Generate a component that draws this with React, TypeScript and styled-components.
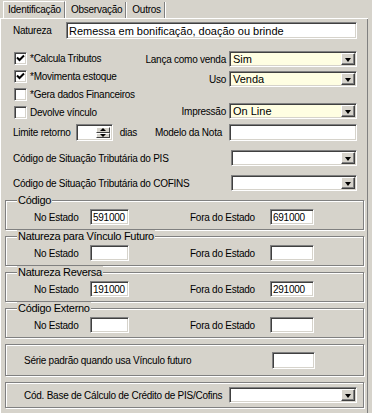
import styled, { createGlobalStyle } from "styled-components";

const GlobalStyle = createGlobalStyle`
  html, body { margin: 0; padding: 0; background: #ffffff; }
  body {
    font-family: "Liberation Sans", Arial, sans-serif;
    font-size: 10px;
    letter-spacing: -0.25px;
    color: #000000;
  }
  * { box-sizing: border-box; }
`;

const FACE = "#d6d3cb";

const Window = styled.div`
  width: 372px;
  height: 413px;
  background: ${FACE};
  display: flex;
  flex-direction: column;
`;

const TabBar = styled.div`
  display: flex;
  height: 19px;
  width: 368px;
  padding: 2px 0 0 3px;
  border-bottom: 1px solid #ffffff;
`;

const Tab = styled.div<{ $active?: boolean }>`
  height: 16px;
  line-height: 15px;
  padding: 0 3px 0 4px;
  margin-right: 2px;
  border-right: 1px solid #808080;
  box-shadow: 1px 0 0 #ffffff;
  white-space: nowrap;
  ${(p) => (p.$active ? "border-left: 1px solid #ffffff; border-top: 1px solid #ffffff; margin-top: -1px; height: 17px;" : "")}
`;

const Panel = styled.div`
  flex: 1;
  width: 368px;
  border-left: 1px solid #ffffff;
  border-right: 1px solid #808080;
  display: flex;
  flex-direction: column;
`;

const Row = styled.div<{ $mt?: number }>`
  display: flex;
  align-items: center;
  margin-top: ${(p) => p.$mt ?? 0}px;
  padding-left: 12px;
  padding-right: 10px;
`;

const Label = styled.span<{ $w?: number }>`
  display: inline-block;
  flex-shrink: 0;
  white-space: nowrap;
  width: ${(p) => (p.$w ? `${p.$w}px` : "auto")};
`;

const Spacer = styled.div`
  flex: 1;
`;

const sunken = `
  border: 1px solid;
  border-color: #808080 #ffffff #ffffff #808080;
  box-shadow: inset 1px 1px 0 #404040, inset -1px -1px 0 ${FACE};
`;

const TextBox = styled.input<{ $w?: number; $h?: number; $big?: boolean }>`
  ${sunken}
  width: ${(p) => (p.$w ? `${p.$w}px` : "auto")};
  flex: ${(p) => (p.$w ? "none" : "1")};
  height: ${(p) => p.$h ?? 17}px;
  background: #ffffff;
  font-family: inherit;
  font-size: ${(p) => (p.$big ? 11 : 10)}px;
  letter-spacing: ${(p) => (p.$big ? 0 : -0.25)}px;
  color: #000;
  padding: 1px 0 0 2px;
  outline: none;
  margin: 0;
`;

const Combo = styled.div<{ $w: number; $yellow?: boolean }>`
  ${sunken}
  width: ${(p) => p.$w}px;
  height: 16px;
  padding: 2px;
  display: flex;
  background: ${(p) => (p.$yellow ? "#fffee2" : "#ffffff")};
  flex-shrink: 0;
`;

const ComboValue = styled.span`
  flex: 1;
  line-height: 11px;
  padding-left: 1px;
  white-space: nowrap;
  font-size: 11px;
  letter-spacing: 0;
`;

const DropButton = styled.div`
  width: 14px;
  background: ${FACE};
  border: 1px solid;
  border-color: #ffffff #404040 #404040 #ffffff;
  box-shadow: inset -1px -1px 0 #808080;
  display: flex;
  align-items: center;
  justify-content: center;
  margin: -1px -1px -1px 0;
  &::after {
    content: "";
    width: 0;
    height: 0;
    border-left: 3.5px solid transparent;
    border-right: 3.5px solid transparent;
    border-top: 4px solid #000;
    margin-top: 1px;
  }
`;

const Options = styled.div`
  display: flex;
  margin-top: 10px;
`;

const CheckColumn = styled.div`
  width: 130px;
  padding-left: 13px;
  display: flex;
  flex-direction: column;
`;

const CheckRow = styled.div`
  height: 18px;
  display: flex;
  align-items: center;
  gap: 3px;
  white-space: nowrap;
`;

const CheckBox = styled.div`
  ${sunken}
  width: 13px;
  height: 13px;
  background: #ffffff;
  flex-shrink: 0;
  display: flex;
  align-items: center;
  justify-content: center;
`;

const SelectColumn = styled.div`
  flex: 1;
  display: flex;
  flex-direction: column;
  align-items: flex-end;
  padding-right: 10px;
`;

const SelectRow = styled.div<{ $mt: number }>`
  display: flex;
  align-items: center;
  gap: 3px;
  white-space: nowrap;
  margin-top: ${(p) => p.$mt}px;
`;

const Spin = styled.div`
  ${sunken}
  width: 37px;
  height: 17px;
  background: #ffffff;
  display: flex;
  justify-content: flex-end;
  padding: 2px;
  margin: 0 7px 0 5px;
`;

const SpinButtons = styled.div`
  width: 14px;
  display: flex;
  flex-direction: column;
`;

const SpinButton = styled.div<{ $up?: boolean }>`
  flex: 1;
  background: ${FACE};
  border: 1px solid;
  border-color: #ffffff #404040 #404040 #ffffff;
  display: flex;
  align-items: center;
  justify-content: center;
  &::after {
    content: "";
    width: 0;
    height: 0;
    border-left: 3px solid transparent;
    border-right: 3px solid transparent;
    ${(p) => (p.$up ? "border-bottom: 3px solid #000;" : "border-top: 3px solid #000;")}
  }
`;

const Group = styled.fieldset<{ $mt?: number }>`
  margin: ${(p) => p.$mt ?? 0}px 3px 0 4px;
  padding: 2px 0 4px 0;
  border: 1px solid #808080;
  box-shadow: inset 1px 1px 0 #ffffff, 1px 1px 0 #ffffff;
  min-inline-size: 0;
`;

const Legend = styled.legend`
  margin-left: 11px;
  padding: 0 1px;
  line-height: 13px;
  font-size: 11px;
  letter-spacing: -0.3px;
  background: ${FACE};
`;

const GroupRow = styled.div`
  display: flex;
  align-items: center;
  padding-left: 28px;
`;

const PlainBox = styled.div<{ $mt: number; $h: number }>`
  margin: ${(p) => p.$mt}px 3px 0 4px;
  height: ${(p) => p.$h}px;
  flex-shrink: 0;
  padding: 0 6px 0 18px;
  border: 1px solid #808080;
  box-shadow: inset 1px 1px 0 #ffffff, 1px 1px 0 #ffffff;
  display: flex;
  align-items: center;
`;

function Check({ checked }: { checked?: boolean }) {
  return (
    <CheckBox>
      {checked && (
        <svg width="9" height="9" viewBox="0 0 9 9">
          <path d="M1 3.5 L3.5 6 L8 1.5" stroke="#000" strokeWidth="2" fill="none" />
        </svg>
      )}
    </CheckBox>
  );
}

function Select({ w, value, yellow }: { w: number; value?: string; yellow?: boolean }) {
  return (
    <Combo $w={w} $yellow={yellow}>
      <ComboValue>{value}</ComboValue>
      <DropButton />
    </Combo>
  );
}

function EstadoGroup({ title, dentro, fora, mt }: { title: string; dentro: string; fora: string; mt?: number }) {
  return (
    <Group $mt={mt}>
      <Legend>{title}</Legend>
      <GroupRow>
        <Label $w={56}>No Estado</Label>
        <TextBox $w={39} $h={16} readOnly value={dentro} />
        <Label $w={61} />
        <Label $w={80}>Fora do Estado</Label>
        <TextBox $w={44} $h={16} readOnly value={fora} />
      </GroupRow>
    </Group>
  );
}

export default function App() {
  return (
    <>
      <GlobalStyle />
      <Window>
        <TabBar>
          <Tab $active>Identificação</Tab>
          <Tab>Observação</Tab>
          <Tab>Outros</Tab>
        </TabBar>
        <Panel>
          <Row $mt={3}>
            <Label $w={53}>Natureza</Label>
            <TextBox $big readOnly value="Remessa em bonificação, doação ou brinde" />
          </Row>

          <Options>
            <CheckColumn>
              <CheckRow>
                <Check checked />
                *Calcula Tributos
              </CheckRow>
              <CheckRow>
                <Check checked />
                *Movimenta estoque
              </CheckRow>
              <CheckRow>
                <Check />
                *Gera dados Financeiros
              </CheckRow>
              <CheckRow>
                <Check />
                Devolve vínculo
              </CheckRow>
            </CheckColumn>
            <SelectColumn>
              <SelectRow $mt={2}>
                Lança como venda
                <Select w={128} value="Sim" yellow />
              </SelectRow>
              <SelectRow $mt={4}>
                Uso
                <Select w={128} value="Venda" yellow />
              </SelectRow>
              <SelectRow $mt={16}>
                Impressão
                <Select w={128} value="On Line" yellow />
              </SelectRow>
            </SelectColumn>
          </Options>

          <Row $mt={3}>
            <Label>Limite retorno</Label>
            <Spin>
              <SpinButtons>
                <SpinButton $up />
                <SpinButton />
              </SpinButtons>
            </Spin>
            <Label>dias</Label>
            <Spacer />
            <Label>Modelo da Nota</Label>
            <TextBox $w={128} readOnly value="" style={{ marginLeft: 7 }} />
          </Row>

          <Row $mt={9}>
            <Label>Código de Situação Tributária do PIS</Label>
            <Spacer />
            <Select w={126} />
          </Row>
          <Row $mt={9}>
            <Label>Código de Situação Tributária do COFINS</Label>
            <Spacer />
            <Select w={126} />
          </Row>

          <EstadoGroup mt={3} title="Código" dentro="591000" fora="691000" />
          <EstadoGroup title="Natureza para Vínculo Futuro" dentro="" fora="" />
          <EstadoGroup title="Natureza Reversa" dentro="191000" fora="291000" />
          <EstadoGroup title="Código Externo" dentro="" fora="" />

          <PlainBox $mt={6} $h={32}>
            <Label>Série padrão quando usa Vínculo futuro</Label>
            <Spacer />
            <TextBox $w={43} readOnly value="" style={{ marginRight: 42 }} />
          </PlainBox>
          <PlainBox $mt={6} $h={26}>
            <Label>Cód. Base de Cálculo de Crédito de PIS/Cofins</Label>
            <Spacer />
            <Select w={128} />
          </PlainBox>
        </Panel>
      </Window>
    </>
  );
}
